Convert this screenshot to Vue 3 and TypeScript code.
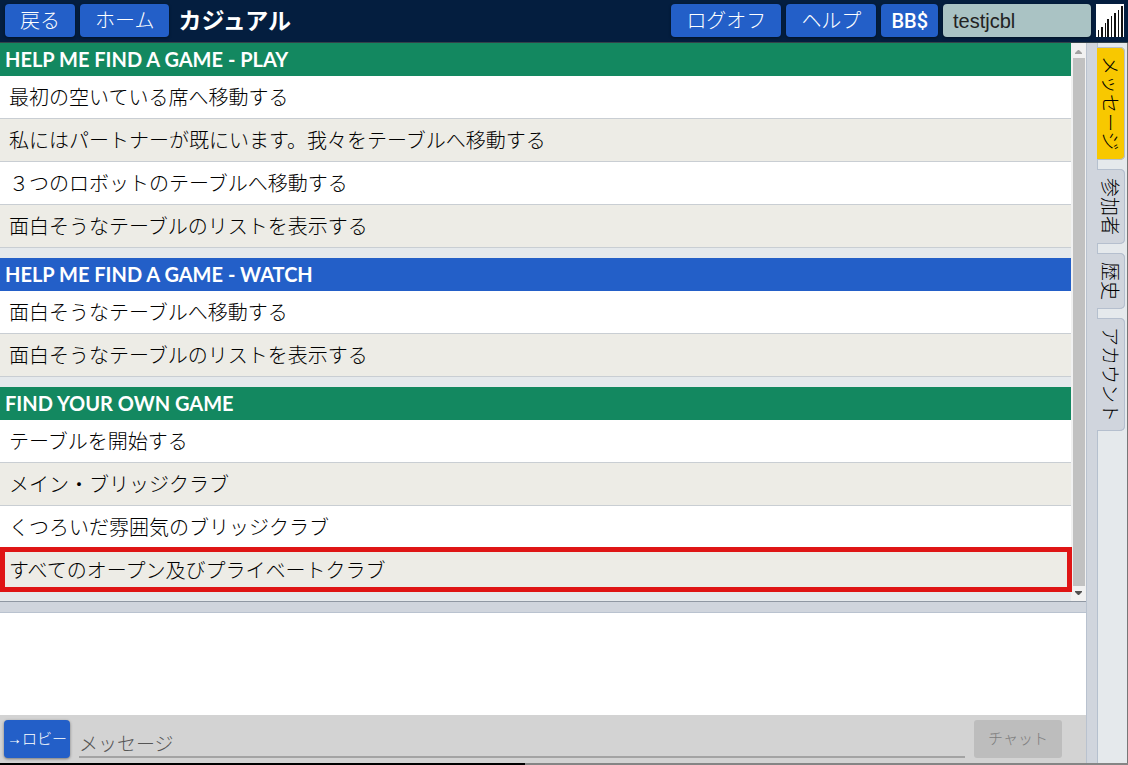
<script setup lang="ts">
import { ref } from 'vue'

interface Section {
  title: string
  tone: 'green' | 'blue'
  items: string[]
}

const sections: Section[] = [
  {
    title: 'HELP ME FIND A GAME - PLAY',
    tone: 'green',
    items: [
      '最初の空いている席へ移動する',
      '私にはパートナーが既にいます。我々をテーブルへ移動する',
      '３つのロボットのテーブルへ移動する',
      '面白そうなテーブルのリストを表示する',
    ],
  },
  {
    title: 'HELP ME FIND A GAME - WATCH',
    tone: 'blue',
    items: ['面白そうなテーブルへ移動する', '面白そうなテーブルのリストを表示する'],
  },
  {
    title: 'FIND YOUR OWN GAME',
    tone: 'green',
    items: [
      'テーブルを開始する',
      'メイン・ブリッジクラブ',
      'くつろいだ雰囲気のブリッジクラブ',
      'すべてのオープン及びプライベートクラブ',
    ],
  },
]

const highlighted = 'すべてのオープン及びプライベートクラブ'
const tabs = ['メッセージ', '参加者', '歴史', 'アカウント']
const activeTab = ref('メッセージ')
const message = ref('')
</script>

<template>
  <div class="app">
    <header class="bar">
      <button type="button" class="btn">戻る</button>
      <button type="button" class="btn">ホーム</button>
      <h1 class="title">カジュアル</h1>
      <button type="button" class="btn">ログオフ</button>
      <button type="button" class="btn">ヘルプ</button>
      <button type="button" class="btn money">BB$</button>
      <button type="button" class="btn user">testjcbl</button>
      <svg class="signal" viewBox="0 0 28 33" aria-hidden="true">
        <rect width="28" height="33" fill="#fff" />
        <g fill="#111">
          <rect x="2" y="26" width="1" height="7" />
          <rect x="5" y="23" width="2" height="10" />
          <rect x="9" y="19" width="1" height="14" />
          <rect x="11" y="15" width="2" height="18" />
          <rect x="15" y="12" width="1" height="21" />
          <rect x="18" y="9" width="2" height="24" />
          <rect x="22" y="6" width="1" height="27" />
          <rect x="25" y="2" width="2" height="31" />
        </g>
      </svg>
    </header>

    <div class="body">
      <div class="left">
        <div class="list-pane">
          <main class="list">
            <section v-for="s in sections" :key="s.title" class="section">
              <h2 class="heading" :class="s.tone">{{ s.title }}</h2>
              <button
                v-for="item in s.items"
                :key="item"
                type="button"
                class="row"
                :class="{ marked: item === highlighted }"
              >
                {{ item }}
              </button>
            </section>
          </main>
          <div class="scroll" aria-hidden="true">
            <svg class="arrow" viewBox="0 0 13 15"><path d="M3 11h7v-1L7 7H6L3 10z" fill="#a3a3a3" /></svg>
            <div class="thumb"></div>
            <svg class="arrow" viewBox="0 0 13 15"><path d="M3 5h7v1L7 9H6L3 6z" fill="#505050" /></svg>
          </div>
        </div>

        <div class="log"></div>

        <form class="chat" @submit.prevent>
          <button type="button" class="btn lobby">→ロビー</button>
          <input v-model="message" class="message" type="text" placeholder="メッセージ" aria-label="メッセージ" />
          <button type="submit" class="send" disabled>チャット</button>
        </form>
      </div>

      <nav class="tabs">
        <button
          v-for="t in tabs"
          :key="t"
          type="button"
          class="tab"
          :class="{ active: t === activeTab }"
          @click="activeTab = t"
        >
          {{ t }}
        </button>
      </nav>
    </div>
    <div class="foot"></div>
  </div>
</template>

<style>
body {
  margin: 0;
}
</style>

<style scoped>
.app {
  box-sizing: border-box;
  min-height: 100vh;
  display: flex;
  flex-direction: column;
  background: #e5e9ec;
  color: #000;
  font: 300 20px/26px "Liberation Sans", "Noto Sans CJK JP", sans-serif;
}
button,
input {
  font: inherit;
  color: inherit;
  border: 0;
  margin: 0;
}
.bar {
  display: flex;
  align-items: center;
  gap: 5px;
  padding: 4px 4px 5px 5px;
  background: #041e3f;
  border-bottom: 1px solid #33424a;
}
.btn {
  height: 33px;
  padding: 0 15px;
  border-radius: 4px;
  background: #235fc8;
  color: #fff;
  white-space: nowrap;
  box-shadow: 0 1px 3px rgba(0, 0, 0, 0.45);
}
.title {
  flex: 1;
  margin: 0 0 0 4px;
  color: #fff;
  font-size: 23px;
  font-weight: 700;
}
.money {
  padding: 0 10px;
  font-family: Roboto, sans-serif;
  font-weight: 500;
}
.user {
  width: 148px;
  padding: 0 10px;
  background: #aac3c4;
  color: #222;
  text-align: left;
}
.signal {
  width: 28px;
  height: 33px;
}
.body {
  flex: 1;
  display: flex;
  border-right: 1px solid #777;
}
.left {
  flex: 1;
  min-width: 0;
  display: flex;
  flex-direction: column;
  background: #d0d5dd;
  border-right: 1px solid #b9c2cf;
}
.list-pane {
  display: flex;
  border-bottom: 1px solid #9098a3;
}
.list {
  flex: 1;
  min-width: 0;
  background: #e5e9ec;
}
.section {
  padding-bottom: 10px;
}
.section:last-child {
  padding-bottom: 9px;
}
.heading {
  margin: 0;
  padding: 0 5px;
  color: #fff;
  font: 700 20px/33px Lato, sans-serif;
}
.green {
  background: #138860;
}
.blue {
  background: #235fc8;
}
.row {
  position: relative;
  display: block;
  box-sizing: border-box;
  width: 100%;
  min-height: 43px;
  padding: 2px 9px 0;
  border-bottom: 1px solid #c9ced3;
  background: #fff;
  text-align: left;
}
.row:nth-of-type(even) {
  background: #edece6;
}
.marked::after {
  content: "";
  position: absolute;
  inset: -2px -1px -1px 0;
  border: 5px solid #df1515;
}
.scroll {
  width: 15px;
  box-sizing: border-box;
  padding: 0 1px;
  display: flex;
  flex-direction: column;
  background: #f1f1f1;
}
.arrow {
  width: 13px;
  height: 15px;
}
.thumb {
  flex: 1;
  margin-left: 1px;
  background: #c1c1c1;
}
.log {
  flex: 1;
  min-height: 60px;
  margin-top: 10px;
  background: #fff;
  border-top: 1px solid #b9c2cf;
}
.chat {
  display: flex;
  align-items: center;
  padding: 5px 24px 5px 4px;
  background: #d3d3d3;
}
.lobby {
  width: 66px;
  height: 38px;
  padding: 0;
  font-size: 15px;
}
.message {
  flex: 1;
  min-width: 0;
  height: 38px;
  box-sizing: border-box;
  margin: 0 9px;
  padding: 14px 0 0;
  border-bottom: 2px solid #a3a3a3;
  background: transparent;
  outline: none;
  font-size: 19px;
  line-height: 22px;
}
.message::placeholder {
  color: #555;
  opacity: 1;
}
.send {
  width: 88px;
  height: 38px;
  padding: 0;
  border-radius: 3px;
  background: #bdbdbd;
  color: #7c7c7c;
  font-size: 15px;
}
.tabs {
  display: flex;
  flex-direction: column;
  align-items: flex-start;
  gap: 9px;
  width: 30px;
  padding-top: 4px;
  border-left: 10px solid #d0d5dd;
  box-shadow: inset 1px 0 #b5c0ce;
}
.tab {
  box-sizing: border-box;
  width: 28px;
  padding: 9px 3px 9px 0;
  border-radius: 0 5px 5px 0;
  background: #d0d5dd;
  box-shadow: inset -1px 0 #b5bfce, inset 0 1px #b5bfce, inset 0 -1px #b5bfce;
  font-size: 19px;
  line-height: 25px;
  writing-mode: vertical-rl;
  text-orientation: sideways;
}
.active {
  background: #f8c800;
}
.foot {
  height: 2px;
  background: linear-gradient(90deg, #000 525px, #858585 525px);
}
</style>
